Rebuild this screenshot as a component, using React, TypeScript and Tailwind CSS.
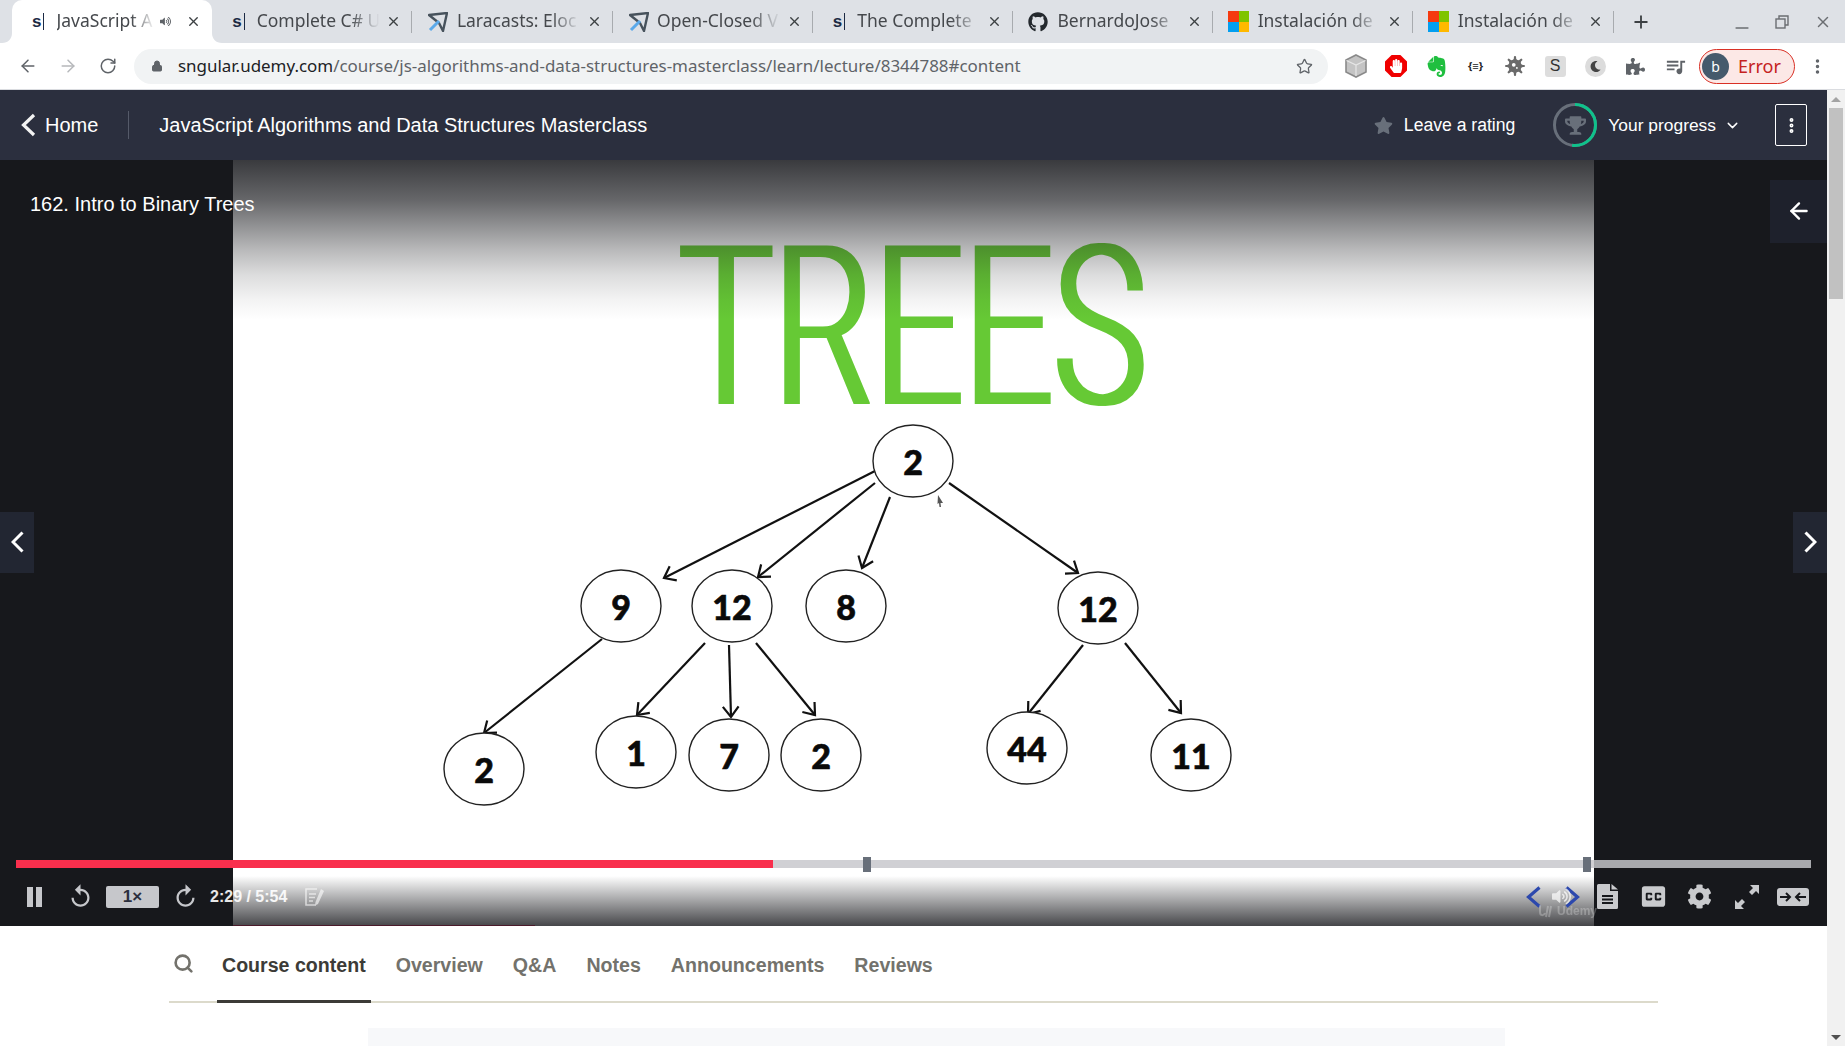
import React from "react";
import { ArrowLeft, ArrowRight, RotateCw, Star, X, Plus, Minus, MoreVertical, Search, ChevronDown, Lock } from "lucide-react";
import { FaGithub, FaStar, FaTrophy, FaCog, FaVolumeUp, FaPuzzlePiece, FaHandPaper, FaMoon, FaVirus } from "react-icons/fa";
import { SiEvernote } from "react-icons/si";
import { MdQueueMusic, MdClosedCaption, MdReplay } from "react-icons/md";

const sans = "font-['Liberation_Sans',Arial,sans-serif]";
const ui = "font-['Noto_Sans',sans-serif]";

function UdemyIcon() {
  return (
    <span className="flex w-[16px] items-center">
      <span className="font-['Liberation_Sans',sans-serif] text-[17px] font-bold leading-none text-[#1c2a44]">s</span>
      <span className="ml-[2px] h-[17px] w-[1px] bg-[#1c2a44]" />
    </span>
  );
}
function PlaneIcon() {
  return (
    <svg width="20" height="20" viewBox="0 0 20 20" className="-ml-[4px]">
      <path d="M1 3 L19 1 L15 19 L11 11 Z" fill="none" stroke="#47525c" strokeWidth="2.4" strokeLinejoin="round" />
      <path d="M11 9 L2 18" stroke="#5aa9ea" strokeWidth="3" />
    </svg>
  );
}
function MsIcon() {
  return (
    <span className="-ml-[5px] grid h-[21px] w-[21px] grid-cols-2">
      <span className="bg-[#f53a10]" />
      <span className="bg-[#7fc400]" />
      <span className="bg-[#039ff0]" />
      <span className="bg-[#ffb900]" />
    </span>
  );
}

const tabs: { title: string; icon: React.ReactNode; active?: boolean }[] = [
  { title: "JavaScript A", icon: <UdemyIcon />, active: true },
  { title: "Complete C# U", icon: <UdemyIcon /> },
  { title: "Laracasts: Eloc", icon: <PlaneIcon /> },
  { title: "Open-Closed V", icon: <PlaneIcon /> },
  { title: "The Complete", icon: <UdemyIcon /> },
  { title: "BernardoJose", icon: <FaGithub size={20} color="#24292e" className="-ml-[5px]" /> },
  { title: "Instalación de", icon: <MsIcon /> },
  { title: "Instalación de", icon: <MsIcon /> },
];

function BrowserTab({ title, icon, active }: { title: string; icon: React.ReactNode; active?: boolean }) {
  return (
    <div className={`relative flex h-[43px] w-[200.2px] shrink-0 items-center pl-[20px] pr-[11px] ${active ? "rounded-t-[10px] bg-white" : ""}`}>
      {active && (
        <>
          <svg width="10" height="10" viewBox="0 0 10 10" className="absolute bottom-0 -left-[10px]"><path d="M10 0 V10 H0 C6 10 10 6 10 0Z" fill="#fff" /></svg>
          <svg width="10" height="10" viewBox="0 0 10 10" className="absolute bottom-0 -right-[10px]"><path d="M0 0 V10 H10 C4 10 0 6 0 0Z" fill="#fff" /></svg>
        </>
      )}
      <span className="flex w-[24.5px] shrink-0 items-center">{icon}</span>
      <span className={`${ui} min-w-0 flex-1 -translate-y-[1px] whitespace-nowrap text-[17.5px] text-[#45484c] [mask-image:linear-gradient(to_right,black_72%,transparent_95%)]`}>
        {title}
      </span>
      {active && <FaVolumeUp size={11} color="#5f6368" className="mr-[15px] shrink-0" />}
      <X size={15} strokeWidth={2.2} color="#3c4043" className="shrink-0" />
      {!active && <span className="absolute bottom-[10px] right-0 top-[11px] w-[1px] bg-[#a8abaf]" />}
    </div>
  );
}

function TabStrip() {
  return (
    <div className="flex h-[43px] items-center bg-[#dee1e6] pl-[12px]">
      {tabs.map((t, i) => (
        <BrowserTab key={i} {...t} />
      ))}
      <Plus size={20} strokeWidth={2.2} color="#3c4043" className="ml-[17px] shrink-0" />
      <div className="ml-auto flex items-center pr-[13px] text-[#6b6e72]">
        <Minus size={20} className="translate-y-[6px]" />
        <svg width="14" height="14" viewBox="0 0 14 14" fill="none" stroke="#6b6e72" strokeWidth="1.4" className="ml-[23px]"><rect x="1" y="4" width="9" height="9" /><path d="M4 4 V1 H13 V10 H10" /></svg>
        <X size={18} className="ml-[25px]" />
      </div>
    </div>
  );
}

function ExtensionIcons() {
  return (
    <div className="flex items-center">
      <span className="flex w-[40px] justify-center">
        <svg width="22" height="24" viewBox="0 0 22 24"><path d="M11 1 L21 6 V18 L11 23 L1 18 V6Z" fill="#c4c4c4" stroke="#8a8a8a" strokeWidth="1.6" /><path d="M1.5 6.5 L11 11 L20.5 6.5 M11 11 V22" fill="none" stroke="#e6e6e6" strokeWidth="1.2" /></svg>
      </span>
      <span className="flex w-[40px] justify-center">
        <span className="flex h-[22px] w-[22px] items-center justify-center bg-[#f00000] [clip-path:polygon(30%_0,70%_0,100%_30%,100%_70%,70%_100%,30%_100%,0_70%,0_30%)]">
          <FaHandPaper size={14} color="#fff" />
        </span>
      </span>
      <span className="flex w-[40px] justify-center"><SiEvernote size={21} color="#1fbf3f" /></span>
      <span className={`${ui} flex w-[39px] justify-center text-[11px] font-bold text-[#202124]`}>{"{≡}"}</span>
      <span className="flex w-[40px] justify-center"><FaVirus size={20} color="#6a6a6a" /></span>
      <span className="flex w-[40px] justify-center">
        <span className={`${sans} flex h-[21px] w-[21px] items-center justify-center rounded-[3px] bg-[#dddddd] text-[16px] text-[#333]`}>S</span>
      </span>
      <span className="flex w-[40px] justify-center">
        <span className="flex h-[21px] w-[21px] items-center justify-center rounded-full bg-[#dcdcdc]"><FaMoon size={11} color="#444" /></span>
      </span>
      <span className="flex w-[40px] justify-center"><FaPuzzlePiece size={19} color="#5f6368" /></span>
      <span className="flex w-[40px] justify-center"><MdQueueMusic size={23} color="#5f6368" /></span>
    </div>
  );
}

function Toolbar() {
  return (
    <div className="flex h-[47px] items-center border-b border-[#dadce0] bg-white">
      <div className="flex w-[134px] shrink-0 items-center pl-[18px]">
        <ArrowLeft size={20} color="#5f6368" strokeWidth={1.8} />
        <ArrowRight size={20} color="#b6b8bb" strokeWidth={1.8} className="ml-[20px]" />
        <RotateCw size={18} color="#5f6368" strokeWidth={2} className="ml-[21px]" />
      </div>
      <div className="flex h-[35px] w-[1194px] shrink-0 items-center rounded-full bg-[#f1f3f4] pl-[17px] pr-[15px]">
        <Lock size={12} fill="#5f6368" color="#5f6368" className="shrink-0" />
        <span className={`${ui} ml-[15px] flex-1 whitespace-nowrap text-[16.95px] text-[#5f6368]`}>
          <span className="text-[#202124]">sngular.udemy.com</span>/course/js-algorithms-and-data-structures-masterclass/learn/lecture/8344788#content
        </span>
        <Star size={17} color="#5f6368" strokeWidth={1.8} className="shrink-0" />
      </div>
      <div className="ml-[8px]"><ExtensionIcons /></div>
      <div className="ml-[4px] flex h-[35px] w-[96px] items-center rounded-full border border-[#d93025] bg-[#fce8e6] pl-[2px]">
        <span className={`${ui} flex h-[27px] w-[27px] items-center justify-center rounded-full bg-[#455a6c] text-[14px] text-white`}>b</span>
        <span className={`${ui} ml-[9px] text-[18px] text-[#c5221f]`}>Error</span>
      </div>
      <MoreVertical size={19} color="#5f6368" strokeWidth={2.4} className="ml-[13px]" />
    </div>
  );
}

function ProgressRing() {
  return (
    <span className="relative flex h-[44px] w-[44px] items-center justify-center">
      <svg width="44" height="44" viewBox="0 0 44 44" className="absolute inset-0 -rotate-90">
        <circle cx="22" cy="22" r="20.5" fill="none" stroke="#686f7a" strokeWidth="3" />
        <circle cx="22" cy="22" r="20.5" fill="none" stroke="#0fc28b" strokeWidth="3" strokeDasharray="67 129" />
      </svg>
      <FaTrophy size={21} color="#686f7a" />
    </span>
  );
}

function CourseHeader() {
  return (
    <div className={`${sans} flex h-[70px] items-center bg-[#2b2f3e] text-white`}>
      <div className="flex items-center pl-[20px]">
        <svg width="16" height="24" viewBox="0 0 16 24" fill="none" stroke="#f3f3f3" strokeWidth="3.2"><path d="M14 2 L3.5 12 L14 22" /></svg>
        <span className="ml-[9px] text-[20px]">Home</span>
      </div>
      <span className="ml-[30px] h-[28px] w-[1px] bg-[#555a69]" />
      <span className="ml-[30px] text-[20px]">JavaScript Algorithms and Data Structures Masterclass</span>
      <div className="ml-auto flex items-center pr-[20px]">
        <FaStar size={19} color="#686f7a" />
        <span className="ml-[11px] text-[17.6px]">Leave a rating</span>
        <span className="ml-[38px]"><ProgressRing /></span>
        <span className="ml-[11px] text-[17.4px]">Your progress</span>
        <ChevronDown size={17} strokeWidth={2} className="ml-[8px]" />
        <span className="ml-[34px] flex h-[42px] w-[32px] items-center justify-center rounded-[2px] border border-white">
          <MoreVertical size={19} strokeWidth={3} />
        </span>
      </div>
    </div>
  );
}

type Node = { x: number; y: number; t: string };
const nodes: Node[] = [
  { x: 913, y: 461, t: "2" },
  { x: 621, y: 606, t: "9" },
  { x: 732, y: 606, t: "12" },
  { x: 846, y: 606, t: "8" },
  { x: 1098, y: 608, t: "12" },
  { x: 484, y: 769, t: "2" },
  { x: 636, y: 752, t: "1" },
  { x: 729, y: 755, t: "7" },
  { x: 821, y: 755, t: "2" },
  { x: 1027, y: 748, t: "44" },
  { x: 1191, y: 755, t: "11" },
];
const arrows = [
  [875, 471, 664, 578],
  [875, 483, 758, 577],
  [890, 497, 862, 568],
  [949, 483, 1078, 573],
  [602, 639, 484, 733],
  [705, 643, 637, 715],
  [729, 645, 731, 717],
  [756, 643, 815, 715],
  [1083, 645, 1028, 714],
  [1125, 643, 1181, 713],
];

function Slide() {
  return (
    <svg viewBox="233 160 1361 766" className="block h-full w-full" preserveAspectRatio="none">
      <defs>
        <filter id="widen" x="-5%" y="-5%" width="110%" height="110%">
          <feMorphology operator="dilate" radius="3 0" />
        </filter>
      </defs>
      <rect x="233" y="160" width="1361" height="766" fill="#fff" />
      <text x="679" y="404" fontFamily="Roboto" fontWeight="300" fontSize="222" fill="#66c936" textLength="468" lengthAdjust="spacingAndGlyphs" filter="url(#widen)">TREES</text>
      {arrows.map(([x1, y1, x2, y2], i) => {
        const a = Math.atan2(y2 - y1, x2 - x1);
        const l = 13;
        const p = (d: number) => `${x2 - l * Math.cos(a + d)},${y2 - l * Math.sin(a + d)}`;
        return (
          <g key={i} stroke="#111" fill="none" strokeWidth="2.2">
            <line x1={x1} y1={y1} x2={x2} y2={y2} />
            <polyline points={`${p(0.65)} ${x2},${y2} ${p(-0.65)}`} />
          </g>
        );
      })}
      {nodes.map((n, i) => (
        <g key={i}>
          <ellipse cx={n.x} cy={n.y} rx="40" ry="36" fill="#fff" stroke="#222" strokeWidth="1.4" />
          <text x={n.x} y={n.y + 13.5} textAnchor="middle" fontFamily="Lato" fontWeight="900" fontSize="34" fill="#0a0a0a" stroke="#0a0a0a" strokeWidth="0.6">{n.t}</text>
        </g>
      ))}
      <path d="M938 495 L943 503 L940.5 503 L941 507 L939.5 507 L939 503 L937.5 504Z" fill="#555" />
    </svg>
  );
}

function CollapseIcon() {
  return (
    <svg width="32" height="18" viewBox="0 0 32 18">
      <rect width="32" height="18" rx="3" fill="#c9cacd" />
      <path d="M3 9 H13 M9 5 L13 9 L9 13 M29 9 H19 M23 5 L19 9 L23 13" fill="none" stroke="#17181c" strokeWidth="2" />
    </svg>
  );
}
function ExpandIcon() {
  return (
    <svg width="26" height="26" viewBox="0 0 26 26" fill="#c9cacd">
      <path d="M16 1 H25 V10 L22 7 L18 11 L15 8 L19 4 Z M1 16 V25 H10 L7 22 L11 18 L8 15 L4 19 Z" />
    </svg>
  );
}
function NoteIcon() {
  return (
    <svg width="20" height="20" viewBox="0 0 20 20" className="ml-[17px] opacity-60">
      <path d="M13 2 H2 V18 H12" fill="none" stroke="#fff" strokeWidth="1.6" />
      <path d="M5 7 H12 M5 10.5 H11 M5 14 H9" stroke="#fff" strokeWidth="1.4" />
      <path d="M17 2 L20 4 L14 17 L11 18.5 L11.5 15 Z" fill="#fff" />
    </svg>
  );
}
function TranscriptIcon() {
  return (
    <svg width="21" height="25" viewBox="0 0 21 25" className="ml-[17px] shrink-0">
      <path d="M1.5 0 H13 V7 H21 V23.5 A1.5 1.5 0 0 1 19.5 25 H1.5 A1.5 1.5 0 0 1 0 23.5 V1.5 A1.5 1.5 0 0 1 1.5 0Z M14.5 0 L21 5.5 H14.5Z" fill="#c9cacd" />
      <path d="M5 12 H16 M5 15.5 H16 M5 19 H16" stroke="#17181c" strokeWidth="1.8" />
    </svg>
  );
}
function BlueChevron({ left }: { left?: boolean }) {
  return (
    <svg width="15" height="22" viewBox="0 0 15 22" fill="none" stroke="#2c48ad" strokeWidth="3.2" className="shrink-0">
      <path d={left ? "M13.5 1.5 L2.5 11 L13.5 20.5" : "M1.5 1.5 L12.5 11 L1.5 20.5"} />
    </svg>
  );
}

function PlayerControls() {
  return (
    <div className="absolute inset-x-0 bottom-0 h-[69px]">
      <div className="relative mx-[16px] mt-[3px] h-[8px] bg-[rgba(198,199,203,0.83)]">
        <div className="h-full w-[757px] bg-[#f92f4d]" />
        <span className="absolute -top-[3px] left-[847px] h-[15px] w-[8px] bg-[#686f7a]" />
        <span className="absolute -top-[3px] left-[1567px] h-[15px] w-[8px] bg-[#686f7a]" />
      </div>
      <div className="flex h-[44px] items-center pt-[13px]">
        <span className="ml-[27px] flex w-[15px] justify-between">
          <span className="h-[20px] w-[6px] bg-[#c6c7cb]" />
          <span className="h-[20px] w-[6px] bg-[#c6c7cb]" />
        </span>
        <MdReplay size={27} color="#c6c7cb" className="ml-[25px]" />
        <span className={`${sans} ml-[12px] flex h-[22px] w-[53px] items-center justify-center rounded-[2px] bg-[#c6c7cb] text-[17px] font-bold text-[#2b2f3e]`}>1×</span>
        <MdReplay size={27} color="#c6c7cb" className="ml-[13px] -scale-x-100" />
        <span className={`${sans} ml-[11px] text-[16px] font-bold text-white/90`}>2:29 / 5:54</span>
        <NoteIcon />
        <div className="relative ml-auto flex items-center pr-[18px]">
          <BlueChevron left />
          <FaVolumeUp size={19} color="#fff" className="ml-[11px] opacity-70" />
          <span className="-ml-[6px]"><BlueChevron /></span>
          <span className="absolute left-[11px] top-[21px] flex items-center opacity-25">
            <svg width="20" height="14" viewBox="0 0 20 14" fill="none" stroke="#fff" strokeWidth="2"><path d="M3 1 V8 C3 12 7 12 8 9 M9 13 L11 2 M12 13 L14 2" /></svg>
            <span className={`${sans} text-[12px] font-bold text-white`}>Udemy</span>
          </span>
          <TranscriptIcon />
          <MdClosedCaption size={31} color="#c9cacd" className="ml-[20px]" />
          <FaCog size={25} color="#c9cacd" className="ml-[18px]" />
          <span className="ml-[22px]"><ExpandIcon /></span>
          <span className="ml-[17px]"><CollapseIcon /></span>
        </div>
      </div>
    </div>
  );
}

function NavBlock({ side }: { side: "left" | "right" }) {
  return (
    <div className={`absolute top-[352px] flex h-[61px] w-[34px] items-center justify-center bg-[#222632] pb-[2px] ${side === "left" ? "left-0" : "right-0"}`}>
      <svg width="13" height="22" viewBox="0 0 13 22" fill="none" stroke="#fff" strokeWidth="3">
        <path d={side === "left" ? "M11.5 1.5 L2 11 L11.5 20.5" : "M1.5 1.5 L11 11 L1.5 20.5"} />
      </svg>
    </div>
  );
}

function Video() {
  return (
    <div className="relative flex h-[766px] bg-[#17181c]">
      <div className="w-[233px] shrink-0" />
      <div className="w-[1361px] shrink-0"><Slide /></div>
      <div className="absolute inset-x-0 top-0 h-[160px] bg-[linear-gradient(to_bottom,rgba(23,24,28,0.85)_0px,rgba(23,24,28,0.66)_40px,rgba(23,24,28,0.3)_90px,rgba(23,24,28,0.15)_115px,rgba(23,24,28,0.05)_140px,transparent_160px)]" />
      <div className="absolute inset-x-0 bottom-0 h-[50px] bg-gradient-to-t from-[rgba(23,24,28,0.8)] to-transparent" />
      <div className="absolute bottom-0 left-[233px] h-[1px] w-[302px] bg-[#4a1a2a]" />
      <div className={`${sans} absolute left-[30px] top-[29px] text-[20px] text-white`}>162. Intro to Binary Trees</div>
      <div className="absolute right-0 top-[20px] flex h-[63px] w-[57px] items-center justify-center bg-[#1e212c] pb-[2px]">
        <ArrowLeft size={26} strokeWidth={2.2} color="#fff" />
      </div>
      <NavBlock side="left" />
      <NavBlock side="right" />
      <PlayerControls />
    </div>
  );
}

function CourseTabs() {
  const items = ["Course content", "Overview", "Q&A", "Notes", "Announcements", "Reviews"];
  return (
    <div className="mx-auto w-[1489px]">
      <div className={`${sans} flex h-[77px] items-end border-b-2 border-[#dcdacb]`}>
        <span className="flex h-[77px] w-[48px] shrink-0 items-center pl-[4px] pt-[1px]">
          <Search size={21} strokeWidth={3} color="#73726c" />
        </span>
        <div className="flex gap-[20px]">
          {items.map((t, i) => (
            <span
              key={t}
              className={`-mb-[2px] flex h-[77px] items-center px-[5px] text-[19.6px] font-bold ${i === 0 ? "border-b-[3px] border-[#3c3b37] pt-[6px] text-[#3c3b37]" : "pt-[3px] text-[#73726c]"}`}
            >
              {t}
            </span>
          ))}
        </div>
      </div>
      <div className="ml-[199px] mt-[25px] h-[18px] w-[1137px] bg-[#f7f8fa]" />
    </div>
  );
}

function Scrollbar() {
  return (
    <div className="flex w-[18px] shrink-0 flex-col items-center bg-[#f1f1f1]">
      <span className="mt-[7px] h-0 w-0 border-x-[5px] border-b-[5px] border-x-transparent border-b-[#a3a3a3]" />
      <span className="mt-[6px] h-[191px] w-[14px] bg-[#c1c1c1]" />
      <span className="mb-[6px] mt-auto h-0 w-0 border-x-[5px] border-t-[5px] border-x-transparent border-t-[#505050]" />
    </div>
  );
}

export default function App() {
  return (
    <div className="flex h-screen flex-col overflow-hidden bg-white">
      <TabStrip />
      <Toolbar />
      <div className="flex min-h-0 flex-1">
        <div className="min-w-0 flex-1">
          <CourseHeader />
          <Video />
          <CourseTabs />
        </div>
        <Scrollbar />
      </div>
    </div>
  );
}
